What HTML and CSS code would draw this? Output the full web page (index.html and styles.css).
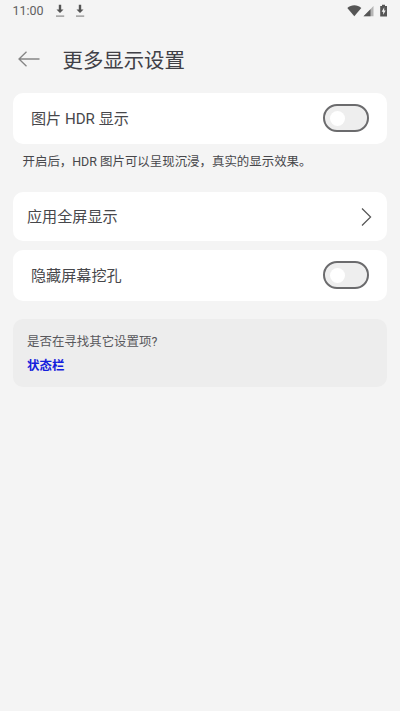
FILE: index.html
```html
<!DOCTYPE html>
<html lang="zh-CN">
<head>
<meta charset="utf-8">
<title>更多显示设置</title>
<link rel="stylesheet" href="styles.css">
</head>
<body>
<div class="status">
  <span class="time">11:00</span>
  <svg class="download" width="10" height="14" viewBox="0 0 10 14"><path d="M3.800 0.800h2.400v4.700h2.300L5 9 1.500 5.500h2.300z"/><path class="base" d="M1 11.500h8.200v1.200H1z"/></svg>
  <svg class="download" width="10" height="14" viewBox="0 0 10 14"><path d="M3.800 0.800h2.400v4.700h2.300L5 9 1.500 5.500h2.300z"/><path class="base" d="M1 11.500h8.200v1.200H1z"/></svg>
  <svg class="signals" width="42" height="14" viewBox="0 0 42 14">
    <path d="M0.300 3.900C4.300 .4 10.300 .4 14.300 3.900L7.300 12.300z"/>
    <path class="faint" d="M26.500 2v10.300H16.500z"/>
    <path d="M23.500 5.200V12.300H16.500z"/>
    <path fill-rule="evenodd" d="M35 .8h3v1.200h2v10.500h-6.800V2H35zM37.200 3.300L34.700 7.800h1.500v3L38.700 6.500h-1.500z"/>
  </svg>
</div>
<header class="header">
  <svg class="back" width="22" height="16" viewBox="0 0 22 16"><path d="M21.500 8H1M8.500 .8L1 8l7.500 7.200"/></svg>
  <h1>更多显示设置</h1>
</header>
<main>
  <section class="card switch-row">
    <span class="label">图片 HDR 显示</span>
    <span class="switch"></span>
  </section>
  <p class="hint">开启后，HDR 图片可以呈现沉浸，真实的显示效果。</p>
  <section class="card link-row">
    <span>应用全屏显示</span>
    <svg class="chevron" width="11" height="20" viewBox="0 0 11 20"><path d="M1 1.500L9.600 10 1 18.500"/></svg>
  </section>
  <section class="card switch-row">
    <span class="label">隐藏屏幕挖孔</span>
    <span class="switch"></span>
  </section>
  <section class="related">
    <p>是否在寻找其它设置项?</p>
    <a>状态栏</a>
  </section>
</main>
</body>
</html>
```
FILE: styles.css
```css
* { box-sizing: border-box; }
body {
  margin: 0;
  min-height: 711px;
  background: #f4f4f4;
  color: #47474b;
  font-family: Roboto, "Noto Sans CJK SC", sans-serif;
}
svg { display: block; flex: none; }
.status {
  display: flex;
  align-items: center;
  height: 22px;
  padding: 0 11.500px 0 12.500px;
}
.time {
  width: 42.500px;
  font: 12.500px/22px Roboto, sans-serif;
  color: #606060;
}
.download { margin-right: 9.500px; fill: #555; }
.base { fill: #888; }
.signals { margin-left: auto; fill: #555; }
.faint { fill: #b5b5b5; }
.header {
  display: flex;
  align-items: center;
  height: 70px;
  padding: 4px 18px 0;
}
.back { fill: none; stroke: #858585; stroke-width: 1.300; }
h1 {
  margin: 0 0 0 22.500px;
  padding-top: 4px;
  font-size: 20.400px;
  font-weight: 400;
  line-height: 30px;
  color: #404046;
}
main { padding: 0.500px 13px 0; }
.card {
  display: flex;
  align-items: center;
  justify-content: space-between;
  border-radius: 10px;
  background: #fff;
  font-size: 15.100px;
  line-height: 22px;
}
.switch-row { height: 51.500px; padding: 0 18px; }
.label { padding-top: 2px; }
.link-row { height: 49px; margin-bottom: 8.500px; padding: 0 15px 0 14px; }
.switch {
  display: flex;
  align-items: center;
  width: 46.500px;
  height: 28px;
  padding-left: 5px;
  border: 2px solid #6b6b6d;
  border-radius: 14px;
  background: #eee;
}
.switch::before {
  content: "";
  width: 15px;
  height: 15px;
  border-radius: 50%;
  background: #fff;
}
.chevron { fill: none; stroke: #555; stroke-width: 1.200; }
.hint {
  height: 48px;
  margin: 0;
  padding: 9px 0 0 9.500px;
  font-size: 12.450px;
  line-height: 18px;
  white-space: nowrap;
}
.related {
  height: 68px;
  margin-top: 18px;
  padding: 14px 14px 12px;
  border-radius: 10px;
  background: #ededed;
  font-size: 12.450px;
  line-height: 18px;
  color: #58585c;
}
.related p { margin: 0 0 6px; }
.related a { display: block; font-weight: 700; color: #1420dc; }
```
